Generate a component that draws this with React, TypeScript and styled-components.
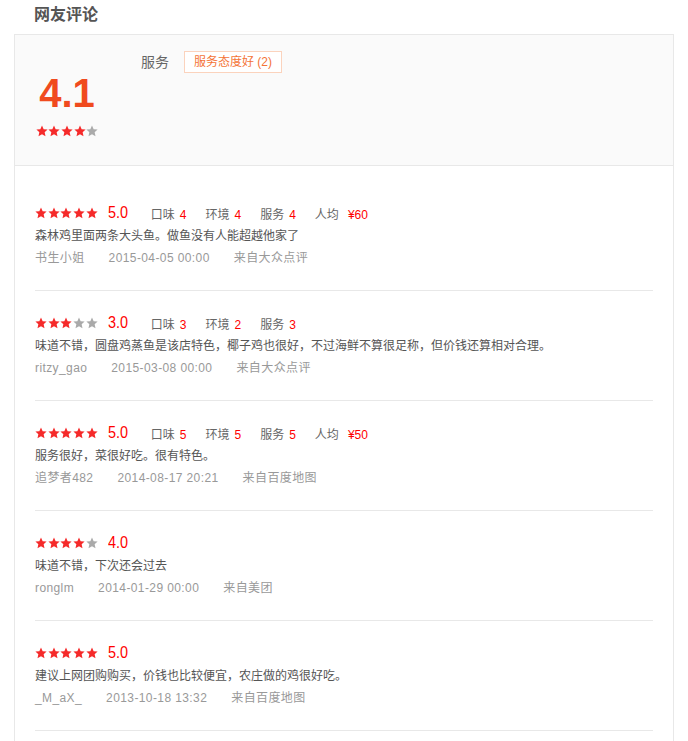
import React from "react";
import styled, { createGlobalStyle } from "styled-components";

const GlobalStyle = createGlobalStyle`
  html, body {
    margin: 0;
    padding: 0;
    background: #fff;
  }
  body {
    font-family: "Liberation Sans", Arial, "Noto Sans CJK SC", sans-serif;
    color: #555;
  }
`;

type Review = {
  rating: number;
  scores: { label: string; value: string }[];
  text: string;
  user: string;
  time: string;
  source: string;
};

const reviews: Review[] = [
  {
    rating: 5,
    scores: [
      { label: "口味", value: "4" },
      { label: "环境", value: "4" },
      { label: "服务", value: "4" },
      { label: "人均", value: "¥60" },
    ],
    text: "森林鸡里面两条大头鱼。做鱼没有人能超越他家了",
    user: "书生小姐",
    time: "2015-04-05 00:00",
    source: "来自大众点评",
  },
  {
    rating: 3,
    scores: [
      { label: "口味", value: "3" },
      { label: "环境", value: "2" },
      { label: "服务", value: "3" },
    ],
    text: "味道不错，圆盘鸡蒸鱼是该店特色，椰子鸡也很好，不过海鲜不算很足称，但价钱还算相对合理。",
    user: "ritzy_gao",
    time: "2015-03-08 00:00",
    source: "来自大众点评",
  },
  {
    rating: 5,
    scores: [
      { label: "口味", value: "5" },
      { label: "环境", value: "5" },
      { label: "服务", value: "5" },
      { label: "人均", value: "¥50" },
    ],
    text: "服务很好，菜很好吃。很有特色。",
    user: "追梦者482",
    time: "2014-08-17 20:21",
    source: "来自百度地图",
  },
  {
    rating: 4,
    scores: [],
    text: "味道不错，下次还会过去",
    user: "ronglm",
    time: "2014-01-29 00:00",
    source: "来自美团",
  },
  {
    rating: 5,
    scores: [],
    text: "建议上网团购购买，价钱也比较便宜，农庄做的鸡很好吃。",
    user: "_M_aX_",
    time: "2013-10-18 13:32",
    source: "来自百度地图",
  },
];

const Page = styled.div`
  padding: 0 15px 0 14px;
`;

const Title = styled.h2`
  margin: 0;
  height: 34px;
  line-height: 30px;
  padding-left: 20px;
  font-size: 16px;
  font-weight: bold;
  color: #555;
`;

const Panel = styled.div`
  width: 660px;
  box-sizing: border-box;
  border: 1px solid #e8e8e8;
  border-bottom: none;
  min-height: 720px;
`;

const Summary = styled.div`
  display: flex;
  height: 131px;
  box-sizing: border-box;
  padding: 16px 20px 0;
  background: #fafafa;
  border-bottom: 1px solid #e8e8e8;
`;

const ScoreCol = styled.div`
  width: 64px;
  padding-top: 22px;
  text-align: center;
`;

const BigScore = styled.div`
  font-size: 40px;
  line-height: 40px;
  font-weight: bold;
  color: #f04a1e;
`;

const ScoreStars = styled.div`
  margin-top: 12px;
  display: flex;
  justify-content: center;
`;

const TagCol = styled.div`
  margin-left: 42px;
  display: flex;
  align-items: flex-start;
  gap: 15px;
`;

const TagLabel = styled.span`
  font-size: 14px;
  line-height: 22px;
  height: 22px;
  color: #666;
`;

const Tag = styled.span`
  display: inline-block;
  height: 22px;
  line-height: 20px;
  box-sizing: border-box;
  padding: 0 9px;
  border: 1px solid #fbd3bd;
  color: #f47437;
  font-size: 12px;
  background: #fff;
`;

const List = styled.div`
  padding: 15px 20px 0;
`;

const Item = styled.div`
  padding: 21px 0;
  border-bottom: 1px solid #e8e8e8;
`;

const Line = styled.div`
  display: flex;
  align-items: center;
  height: 22px;
  margin-bottom: 1px;
  font-size: 12px;
`;

const Stars = styled.span`
  display: inline-flex;
  gap: 0.7px;
`;

const Rating = styled.span`
  margin-left: 10px;
  width: 43px;
  font-size: 16px;
  color: #f00;
  display: inline-block;
  transform: scaleX(0.9);
  transform-origin: left center;
`;

const Score = styled.span`
  margin-right: 19px;
  color: #666;
`;

const ScoreValue = styled.span<{ $price?: boolean }>`
  color: #f00;
  margin-left: ${(p) => (p.$price ? "9px" : "5px")};
`;

const Text = styled.div`
  height: 22px;
  line-height: 22px;
  font-size: 12px;
  color: #555;
`;

const Meta = styled.div`
  display: flex;
  gap: 24px;
  height: 22px;
  line-height: 22px;
  font-size: 12px;
  color: #999;
  span {
    letter-spacing: 0.4px;
  }
`;

const Star = ({ on }: { on: boolean }) => (
  <svg width="12" height="12" viewBox="0 0 24 24">
    <path
      d="M12 1.2l3.3 7.2 7.9.8-5.9 5.3 1.7 7.8L12 18.3l-7 4 1.7-7.8L.8 9.2l7.9-.8z"
      fill={on ? "#f52a2a" : "#aaa"}
    />
  </svg>
);

const StarRow = ({ n }: { n: number }) => (
  <Stars>
    {[0, 1, 2, 3, 4].map((i) => (
      <Star key={i} on={i < n} />
    ))}
  </Stars>
);

export default function App() {
  return (
    <Page>
      <GlobalStyle />
      <Title>网友评论</Title>
      <Panel>
        <Summary>
          <ScoreCol>
            <BigScore>4.1</BigScore>
            <ScoreStars>
              <StarRow n={4} />
            </ScoreStars>
          </ScoreCol>
          <TagCol>
            <TagLabel>服务</TagLabel>
            <Tag>服务态度好 (2)</Tag>
          </TagCol>
        </Summary>
        <List>
          {reviews.map((r, i) => (
            <Item key={i}>
              <Line>
                <StarRow n={r.rating} />
                <Rating>{r.rating.toFixed(1)}</Rating>
                {r.scores.map((s) => (
                  <Score key={s.label}>
                    {s.label}
                    <ScoreValue $price={s.value.startsWith("¥")}>
                      {s.value}
                    </ScoreValue>
                  </Score>
                ))}
              </Line>
              <Text>{r.text}</Text>
              <Meta>
                <span>{r.user}</span>
                <span>{r.time}</span>
                <span>{r.source}</span>
              </Meta>
            </Item>
          ))}
        </List>
      </Panel>
    </Page>
  );
}
